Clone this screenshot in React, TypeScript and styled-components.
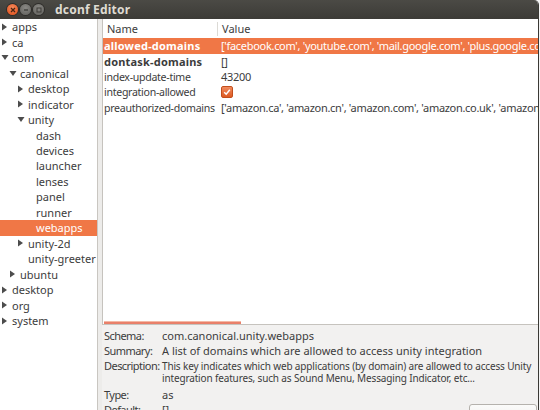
import React from 'react'
import styled, { createGlobalStyle } from 'styled-components'

const GlobalStyle = createGlobalStyle`
  html, body { margin: 0; padding: 0; background: #f4f4f4; }
  body { font-family: 'Noto Sans', 'DejaVu Sans', sans-serif; }
`

type Node = { label: string; depth: number; arrow?: 'right' | 'down'; selected?: boolean }

const tree: Node[] = [
  { label: 'apps', depth: 0, arrow: 'right' },
  { label: 'ca', depth: 0, arrow: 'right' },
  { label: 'com', depth: 0, arrow: 'down' },
  { label: 'canonical', depth: 1, arrow: 'down' },
  { label: 'desktop', depth: 2, arrow: 'right' },
  { label: 'indicator', depth: 2, arrow: 'right' },
  { label: 'unity', depth: 2, arrow: 'down' },
  { label: 'dash', depth: 3 },
  { label: 'devices', depth: 3 },
  { label: 'launcher', depth: 3 },
  { label: 'lenses', depth: 3 },
  { label: 'panel', depth: 3 },
  { label: 'runner', depth: 3 },
  { label: 'webapps', depth: 3, selected: true },
  { label: 'unity-2d', depth: 2, arrow: 'right' },
  { label: 'unity-greeter', depth: 2 },
  { label: 'ubuntu', depth: 1, arrow: 'right' },
  { label: 'desktop', depth: 0, arrow: 'right' },
  { label: 'org', depth: 0, arrow: 'right' },
  { label: 'system', depth: 0, arrow: 'right' },
]

type Key = { name: string; value: string; bold?: boolean; selected?: boolean; check?: boolean }

const keys: Key[] = [
  {
    name: 'allowed-domains',
    value: "['facebook.com', 'youtube.com', 'mail.google.com', 'plus.google.com', 'twitter.com']",
    bold: true,
    selected: true,
  },
  { name: 'dontask-domains', value: '[]', bold: true },
  { name: 'index-update-time', value: '43200' },
  { name: 'integration-allowed', value: '', check: true },
  {
    name: 'preauthorized-domains',
    value: "['amazon.ca', 'amazon.cn', 'amazon.com', 'amazon.co.uk', 'amazon.de', 'amazon.es']",
  },
]

export default function App() {
  return (
    <>
      <GlobalStyle />
      <Window>
        <TitleBar>
          <WinButtons>
            <WinButton $kind="close">
              <svg width="6" height="6" viewBox="0 0 6 6">
                <path d="M1 1L5 5M5 1L1 5" stroke="#4a2412" strokeWidth="1.3" />
              </svg>
            </WinButton>
            <WinButton $kind="min">
              <svg width="6" height="6" viewBox="0 0 6 6">
                <path d="M1 3H5" stroke="#3c3b37" strokeWidth="1.3" />
              </svg>
            </WinButton>
            <WinButton $kind="max">
              <svg width="6" height="6" viewBox="0 0 6 6">
                <rect x="1" y="1" width="4" height="4" fill="none" stroke="#3c3b37" strokeWidth="1" />
              </svg>
            </WinButton>
          </WinButtons>
          <Title>dconf Editor</Title>
        </TitleBar>

        <Body>
          <TreePane>
            {tree.map((n, i) => (
              <TreeRow key={i} $depth={n.depth} $selected={n.selected}>
                <Expander>
                  {n.arrow === 'right' && (
                    <svg width="7" height="8" viewBox="0 0 7 8">
                      <path d="M1 0.5L6 4L1 7.5Z" fill="#4c4c4c" />
                    </svg>
                  )}
                  {n.arrow === 'down' && (
                    <svg width="8" height="7" viewBox="0 0 8 7">
                      <path d="M0.5 1L7.5 1L4 6Z" fill="#4c4c4c" />
                    </svg>
                  )}
                </Expander>
                {n.label}
              </TreeRow>
            ))}
          </TreePane>

          <PaneHandle />

          <RightPane>
            <TableFrame>
              <HeaderRow>
                <HeaderCell $first>Name</HeaderCell>
                <HeaderCell>Value</HeaderCell>
              </HeaderRow>
              {keys.map((k) => (
                <KeyRow key={k.name} $selected={k.selected}>
                  <NameCell $bold={k.bold}>{k.name}</NameCell>
                  <ValueCell>
                    {k.check ? (
                      <CheckBox>
                        <svg width="8" height="8" viewBox="0 0 8 8">
                          <path d="M1.2 4.2L3.2 6.2L6.8 1.8" fill="none" stroke="#fff" strokeWidth="1.5" />
                        </svg>
                      </CheckBox>
                    ) : (
                      k.value
                    )}
                  </ValueCell>
                </KeyRow>
              ))}
              <Spacer />
              <HScroll>
                <ScrollThumb />
              </HScroll>
            </TableFrame>

            <InfoPanel>
              <InfoLabel>Schema:</InfoLabel>
              <InfoValue>com.canonical.unity.webapps</InfoValue>
              <InfoLabel>Summary:</InfoLabel>
              <InfoValue>A list of domains which are allowed to access unity integration</InfoValue>
              <InfoLabel>Description:</InfoLabel>
              <InfoValue $multi>
                This key indicates which web applications (by domain) are allowed to access Unity
                <br />
                integration features, such as Sound Menu, Messaging Indicator, etc...
              </InfoValue>
              <InfoLabel>Type:</InfoLabel>
              <InfoValue>as</InfoValue>
              <InfoLabel>Default:</InfoLabel>
              <InfoValue>[]</InfoValue>
              <DefaultButton>Set to Default</DefaultButton>
            </InfoPanel>
          </RightPane>
        </Body>
      </Window>
    </>
  )
}

const Window = styled.div`
  width: 538px;
  height: 410px;
  display: flex;
  flex-direction: column;
  background: #f2f1f0;
  border-right: 1px solid #3a3935;
  border-top-right-radius: 5px;
  overflow: hidden;
  color: #3c3c3c;
  font-size: 11px;
`

const TitleBar = styled.div`
  height: 19px;
  flex: none;
  display: flex;
  align-items: center;
  background: linear-gradient(#4b4a45, #3c3b37);
  padding-left: 7px;
  gap: 11px;
`

const WinButtons = styled.div`
  display: flex;
  gap: 2px;
`

const WinButton = styled.div<{ $kind: 'close' | 'min' | 'max' }>`
  width: 11px;
  height: 11px;
  border-radius: 50%;
  display: flex;
  align-items: center;
  justify-content: center;
  background: ${(p) =>
    p.$kind === 'close'
      ? 'radial-gradient(circle at 50% 35%, #f58a5c, #df4b16)'
      : 'radial-gradient(circle at 50% 35%, #8a8985, #5f5e5a)'};
  box-shadow: 0 0 0 1px #2e2d2a;
`

const Title = styled.div`
  color: #dfdbd2;
  font-weight: bold;
  font-size: 12px;
  letter-spacing: 0.2px;
`

const Body = styled.div`
  flex: 1;
  display: flex;
  min-height: 0;
`

const TreePane = styled.div`
  width: 97px;
  flex: none;
  background: #fff;
  display: flex;
  flex-direction: column;
`

const TreeRow = styled.div<{ $depth: number; $selected?: boolean }>`
  height: 15.47px;
  display: flex;
  align-items: center;
  padding-left: ${(p) => 1 + p.$depth * 8}px;
  white-space: nowrap;
  background: ${(p) => (p.$selected ? '#f07746' : 'transparent')};
  color: ${(p) => (p.$selected ? '#fff' : '#3c3c3c')};
`

const Expander = styled.span`
  width: 11px;
  flex: none;
  display: flex;
  align-items: center;
`

const PaneHandle = styled.div`
  width: 4px;
  flex: none;
  background: #edecea;
  border-left: 1px solid #c9c6c1;
`

const RightPane = styled.div`
  flex: 1;
  display: flex;
  flex-direction: column;
  min-width: 0;
`

const TableFrame = styled.div`
  flex: 1;
  display: flex;
  flex-direction: column;
  background: #fff;
  border-left: 1px solid #c6c3be;
  border-bottom: 1px solid #c6c3be;
  overflow: hidden;
`

const HeaderRow = styled.div`
  height: 19px;
  flex: none;
  display: flex;
  align-items: center;
  background: #fff;
`

const HeaderCell = styled.div<{ $first?: boolean }>`
  width: ${(p) => (p.$first ? '115px' : 'auto')};
  flex: ${(p) => (p.$first ? 'none' : '1')};
  padding-left: 4px;
  box-sizing: border-box;
  border-right: ${(p) => (p.$first ? '1px solid #dcdad5' : 'none')};
  height: 14px;
  display: flex;
  align-items: center;
`

const KeyRow = styled.div<{ $selected?: boolean }>`
  height: 15.5px;
  flex: none;
  display: flex;
  align-items: center;
  white-space: nowrap;
  background: ${(p) => (p.$selected ? '#f07746' : 'transparent')};
  color: ${(p) => (p.$selected ? '#fff' : '#3c3c3c')};
`

const NameCell = styled.div<{ $bold?: boolean }>`
  width: 115px;
  flex: none;
  padding-left: 1px;
  box-sizing: border-box;
  font-weight: ${(p) => (p.$bold ? 'bold' : 'normal')};
  font-size: ${(p) => (p.$bold ? '11px' : '10.6px')};
  letter-spacing: ${(p) => (p.$bold ? '0.2px' : '-0.3px')};
  overflow: hidden;
`

const ValueCell = styled.div`
  flex: 1;
  padding-left: 3px;
  letter-spacing: -0.3px;
  overflow: hidden;
  display: flex;
  align-items: center;
`

const CheckBox = styled.span`
  width: 10px;
  height: 10px;
  border-radius: 2px;
  background: linear-gradient(#f08a5d, #dd5a22);
  border: 1px solid #c24e1c;
  display: flex;
  align-items: center;
  justify-content: center;
`

const Spacer = styled.div`
  flex: 1;
`

const HScroll = styled.div`
  height: 3px;
  flex: none;
  display: flex;
  padding-left: 1px;
`

const ScrollThumb = styled.div`
  width: 137px;
  height: 3px;
  background: #e9806a;
  border-top: 1px solid #f4b9a6;
  box-sizing: border-box;
`

const InfoPanel = styled.div`
  height: 85px;
  box-sizing: border-box;
  flex: none;
  position: relative;
  overflow: hidden;
  display: grid;
  grid-template-columns: 58px 1fr;
  grid-auto-rows: min-content;
  align-content: start;
  row-gap: 2.5px;
  padding: 5px 0 0 2px;
  line-height: 12.5px;
`

const InfoLabel = styled.div`
  white-space: nowrap;
  letter-spacing: -0.55px;
`

const InfoValue = styled.div<{ $multi?: boolean }>`
  white-space: nowrap;
  font-size: ${(p) => (p.$multi ? '10px' : '11px')};
  letter-spacing: ${(p) => (p.$multi ? '-0.15px' : '0')};
  line-height: ${(p) => (p.$multi ? '12px' : '12.5px')};
  margin-bottom: ${(p) => (p.$multi ? '2px' : '0')};
`

const DefaultButton = styled.div`
  position: absolute;
  right: 1px;
  top: 79px;
  width: 68px;
  height: 22px;
  box-sizing: border-box;
  border: 1px solid #b5b2ad;
  border-radius: 3px;
  background: linear-gradient(#fbfbfa, #ecebe9);
  padding: 4px 0 0 8px;
  white-space: nowrap;
  overflow: hidden;
`
